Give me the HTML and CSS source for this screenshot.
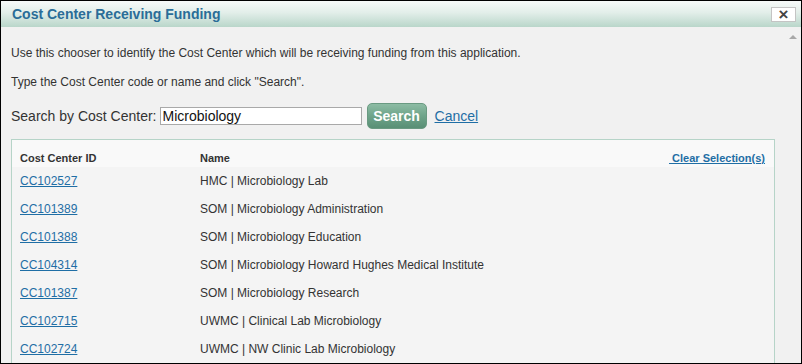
FILE: index.html
```html
<!DOCTYPE html>
<html lang="en">
<head>
    <meta charset="UTF-8">
    <title>Cost Center Receiving Funding</title>
    <link rel="stylesheet" href="styles.css">
</head>
<body>
    <div class="dialog">
        <div class="titlebar">
            <span class="title">Cost Center Receiving Funding</span>
            <button class="close-btn">&times;</button>
        </div>

        <div class="content">
            <span class="scroll-up"></span>
            <p class="intro">Use this chooser to identify the Cost Center which will be receiving funding from this application.</p>
            <p class="hint">Type the Cost Center code or name and click "Search".</p>

            <div class="search-row">
                <label for="ccSearch">Search by Cost Center:</label>
                <input type="text" id="ccSearch" value="Microbiology">
                <button class="search-btn">Search</button>
                <a href="#" class="cancel-link">Cancel</a>
            </div>

            <div class="results">
                <table>
                    <thead>
                        <tr>
                            <th class="col-id">Cost Center ID</th>
                            <th>Name</th>
                            <th class="col-clear"><a href="#">&nbsp;Clear Selection(s)</a></th>
                        </tr>
                    </thead>
                    <tbody>
                        <tr><td><a href="#">CC102527</a></td><td colspan="2">HMC | Microbiology Lab</td></tr>
                        <tr><td><a href="#">CC101389</a></td><td colspan="2">SOM | Microbiology Administration</td></tr>
                        <tr><td><a href="#">CC101388</a></td><td colspan="2">SOM | Microbiology Education</td></tr>
                        <tr><td><a href="#">CC104314</a></td><td colspan="2">SOM | Microbiology Howard Hughes Medical Institute</td></tr>
                        <tr><td><a href="#">CC101387</a></td><td colspan="2">SOM | Microbiology Research</td></tr>
                        <tr><td><a href="#">CC102715</a></td><td colspan="2">UWMC | Clinical Lab Microbiology</td></tr>
                        <tr><td><a href="#">CC102724</a></td><td colspan="2">UWMC | NW Clinic Lab Microbiology</td></tr>
                    </tbody>
                </table>
            </div>
        </div>
    </div>
</body>
</html>
```

FILE: styles.css
```css
body {
    margin: 0;
    padding: 0;
    font-family: "Liberation Sans", Arial, sans-serif;
    color: #333;
    background: #f0f0f0;
}

.dialog {
    width: 802px;
    height: 364px;
    box-sizing: border-box;
    border: 1px solid #000;
    background: #f0f0f0;
    overflow: hidden;
}

.titlebar {
    height: 26px;
    display: flex;
    align-items: center;
    justify-content: space-between;
    padding: 0 5px 0 11px;
    background: linear-gradient(to bottom, #f7faf9 0%, #e2eee9 45%, #b9d6ca 100%);
}

.title {
    font-size: 14px;
    font-weight: bold;
    color: #2a6d98;
}

.close-btn {
    width: 25px;
    height: 15px;
    margin-top: 1px;
    padding: 0;
    border: 1px solid #c4c4c4;
    background: #fff;
    color: #444;
    font-family: "Liberation Sans", Arial, sans-serif;
    font-size: 17px;
    font-weight: bold;
    line-height: 12px;
}

.content {
    position: relative;
    padding: 0 26px 0 10px;
    background: #f1f1f1;
}

.scroll-up {
    position: absolute;
    top: 8px;
    right: 4px;
    width: 0;
    height: 0;
    border-left: 4px solid transparent;
    border-right: 4px solid transparent;
    border-bottom: 4px solid #a8a8a8;
}

.intro, .hint {
    margin: 0;
    font-size: 12px;
    line-height: 14px;
}

.intro {
    padding-top: 19px;
}

.hint {
    margin-top: 15px;
}

.search-row {
    display: flex;
    align-items: center;
    height: 26px;
    margin-top: 14px;
    font-size: 14px;
}

.search-row input {
    width: 202px;
    height: 18px;
    box-sizing: border-box;
    margin: 0 0 0 3px;
    padding: 0 2px;
    border: 1px solid #a9a9a9;
    background: #fff;
    font-family: "Liberation Sans", Arial, sans-serif;
    font-size: 14px;
    color: #111;
}

.search-btn {
    width: 60px;
    height: 26px;
    margin-left: 5px;
    padding: 0;
    border: 1px solid #6a9a82;
    border-radius: 5px;
    background: linear-gradient(to bottom, #8dbca4 0%, #6ea48a 50%, #598f75 100%);
    color: #fff;
    font-family: "Liberation Sans", Arial, sans-serif;
    font-size: 14px;
    font-weight: bold;
}

.cancel-link {
    margin-left: 8px;
    color: #1f6ea5;
}

.results {
    margin-top: 10px;
    border: 1px solid #b6d4c8;
    background: #f4f4f4;
}

.results table {
    width: 100%;
    border-collapse: collapse;
}

.results th {
    padding: 12px 0 2px 0;
    line-height: 13px;
    font-size: 11px;
    font-weight: bold;
    text-align: left;
    color: #333;
    background: #f9f9f9;
}

.results th.col-id {
    width: 180px;
    padding-left: 8px;
}

.results th.col-clear {
    text-align: right;
    padding-right: 9px;
}

.results th a {
    color: #1f6ea5;
}

.results td {
    height: 28px;
    padding: 0;
    font-size: 12px;
    line-height: 14px;
    vertical-align: middle;
}

.results td:first-child {
    padding-left: 8px;
}

.results td a {
    color: #1f6ea5;
}
```
